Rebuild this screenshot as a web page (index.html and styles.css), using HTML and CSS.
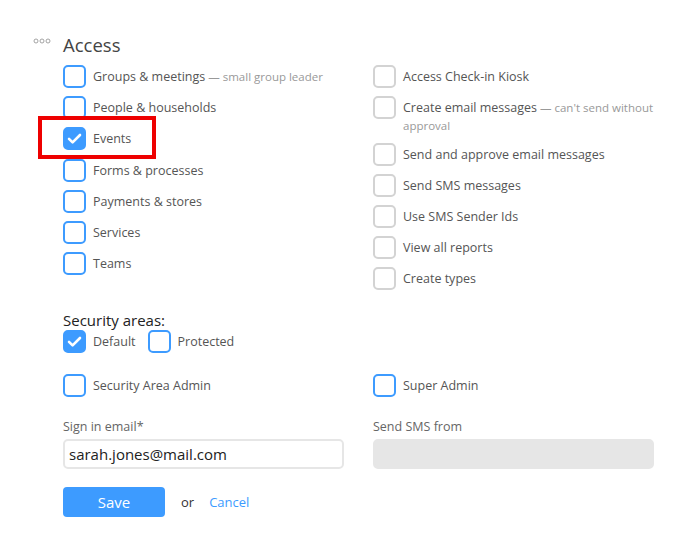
FILE: index.html
```html
<!DOCTYPE html>
<html>
<head>
<meta charset="utf-8">
<link rel="stylesheet" href="styles.css">
</head>
<body>
<div class="page">
  <div class="header">
    <svg class="dots" width="18" height="6" viewBox="0 0 18 6"><circle cx="3" cy="3" r="2" /><circle cx="9" cy="3" r="2" /><circle cx="15" cy="3" r="2" /></svg>
    <h2 class="title">Access</h2>
  </div>
  <div class="grid">
    <div class="col left">
      <label class="row"><span class="box"></span><span class="text">Groups &amp; meetings<span class="hint"> — small group leader</span></span></label>
      <label class="row"><span class="box"></span><span class="text">People &amp; households</span></label>
      <label class="row highlighted"><span class="box checked"><svg viewBox="0 0 23 23"><path d="M6 11.8l3.6 3.6 7.4-7.4" /></svg></span><span class="text">Events</span><span class="annot"></span></label>
      <label class="row"><span class="box"></span><span class="text">Forms &amp; processes</span></label>
      <label class="row"><span class="box"></span><span class="text">Payments &amp; stores</span></label>
      <label class="row"><span class="box"></span><span class="text">Services</span></label>
      <label class="row"><span class="box"></span><span class="text">Teams</span></label>
    </div>
    <div class="col right">
      <label class="row"><span class="box gray"></span><span class="text">Access Check-in Kiosk</span></label>
      <label class="row"><span class="box gray"></span><span class="text">Create email messages<span class="hint"> — can't send without approval</span></span></label>
      <label class="row"><span class="box gray"></span><span class="text">Send and approve email messages</span></label>
      <label class="row"><span class="box gray"></span><span class="text">Send SMS messages</span></label>
      <label class="row"><span class="box gray"></span><span class="text">Use SMS Sender Ids</span></label>
      <label class="row"><span class="box gray"></span><span class="text">View all reports</span></label>
      <label class="row"><span class="box gray"></span><span class="text">Create types</span></label>
    </div>
  </div>

  <div class="security">
    <div class="sec-title">Security areas:</div>
    <div class="inline">
      <label class="row"><span class="box checked"><svg viewBox="0 0 23 23"><path d="M6 11.8l3.6 3.6 7.4-7.4" /></svg></span><span class="text">Default</span></label>
      <label class="row"><span class="box"></span><span class="text">Protected</span></label>
    </div>
  </div>

  <div class="grid admins">
    <label class="row"><span class="box"></span><span class="text">Security Area Admin</span></label>
    <label class="row"><span class="box"></span><span class="text">Super Admin</span></label>
  </div>

  <div class="grid fields">
    <div class="field">
      <div class="flabel">Sign in email*</div>
      <div class="input">sarah.jones@mail.com</div>
    </div>
    <div class="field">
      <div class="flabel">Send SMS from</div>
      <div class="input disabled"></div>
    </div>
  </div>

  <div class="actions">
    <button class="save">Save</button>
    <span class="or">or</span>
    <a class="cancel">Cancel</a>
  </div>
</div>
</body>
</html>
```

FILE: styles.css
```css
* { box-sizing: border-box; }
body {
  margin: 0;
  background: #fff;
  font-family: "Open Sans", "Noto Sans", sans-serif;
  color: #555;
  font-size: 12.5px;
}
.page {
  padding: 33px 0 0 33px;
}
.header {
  display: flex;
  align-items: flex-start;
}
.dots {
  margin-top: 5px;
  width: 18px;
  fill: none;
  stroke: #999;
  stroke-width: 0.9;
}
.title {
  margin: 0 0 0 12px;
  font-size: 18.5px;
  font-weight: 400;
  line-height: 24px;
  color: #444;
}
.grid {
  display: grid;
  grid-template-columns: 310px 281px;
  margin-left: 30px;
}
.col {
  display: flex;
  flex-direction: column;
  gap: 8px;
  margin-top: 8px;
}
.col.left { gap: 8.2px; }
.row {
  display: flex;
  align-items: flex-start;
  position: relative;
}
.box {
  flex: none;
  width: 23px;
  height: 23px;
  border: 2px solid #3d9bff;
  border-radius: 5px;
  background: #fff;
}
.box.gray { border-color: #d3d3d3; }
.box.checked {
  background: #3d9bff;
  border-color: #3d9bff;
  position: relative;
}
.box.checked svg {
  position: absolute;
  left: -2px;
  top: -2px;
  width: 23px;
  height: 23px;
  fill: none;
  stroke: #fff;
  stroke-width: 2.6;
  stroke-linecap: round;
  stroke-linejoin: round;
}
.text {
  padding: 3px 0 0 7px;
  line-height: 18px;
}
.hint {
  color: #999;
  font-size: 11.5px;
  line-height: 18px;
}
.annot {
  position: absolute;
  left: -25px;
  top: -11px;
  width: 118px;
  height: 43px;
  border: 4px solid #ee0000;
}
.security {
  margin: 22px 0 0 30px;
}
.sec-title {
  font-size: 15px;
  line-height: 17px;
  color: #222;
}
.inline {
  display: flex;
  gap: 12px;
  margin-top: 1px;
}
.admins {
  margin-top: 21px;
}
.fields {
  margin-top: 22px;
}
.flabel {
  color: #666;
  line-height: 16px;
  margin-bottom: 4px;
}
.field:first-child .input { width: 281px; }
.input {
  height: 30px;
  border: 2px solid #e6e6e6;
  border-radius: 5px;
  padding: 0 4px;
  font-size: 15px;
  line-height: 26px;
  color: #222;
}
.input.disabled {
  background: #e6e6e6;
  width: 281px;
}
.actions {
  margin: 18px 0 0 30px;
  display: flex;
  align-items: center;
}
.save {
  width: 102px;
  height: 30px;
  border: none;
  border-radius: 4px;
  background: #3d9bff;
  color: #fff;
  font-family: inherit;
  font-size: 15px;
  padding: 0;
}
.or {
  margin-left: 16px;
  color: #333;
  font-size: 13px;
}
.cancel {
  margin-left: 15px;
  color: #3d9bff;
  font-size: 13px;
}
```
